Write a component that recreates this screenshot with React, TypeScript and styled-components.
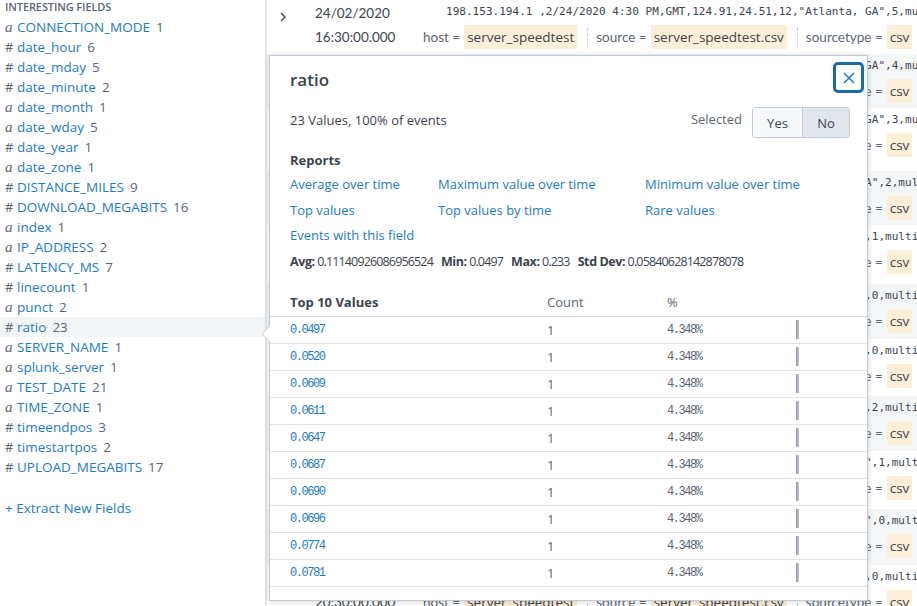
import React from "react";
import styled, { createGlobalStyle, css } from "styled-components";

const GlobalStyle = createGlobalStyle`
  html, body {
    margin: 0;
    padding: 0;
    background: #fff;
    font-family: "Open Sans", "Liberation Sans", sans-serif;
    color: #3c444d;
  }
  * { box-sizing: border-box; }
`;

type FieldType = "a" | "#";

interface Field {
  type: FieldType;
  name: string;
  count: number;
}

const fields: Field[] = [
  { type: "a", name: "CONNECTION_MODE", count: 1 },
  { type: "#", name: "date_hour", count: 6 },
  { type: "#", name: "date_mday", count: 5 },
  { type: "#", name: "date_minute", count: 2 },
  { type: "a", name: "date_month", count: 1 },
  { type: "a", name: "date_wday", count: 5 },
  { type: "#", name: "date_year", count: 1 },
  { type: "a", name: "date_zone", count: 1 },
  { type: "#", name: "DISTANCE_MILES", count: 9 },
  { type: "#", name: "DOWNLOAD_MEGABITS", count: 16 },
  { type: "a", name: "index", count: 1 },
  { type: "a", name: "IP_ADDRESS", count: 2 },
  { type: "#", name: "LATENCY_MS", count: 7 },
  { type: "#", name: "linecount", count: 1 },
  { type: "a", name: "punct", count: 2 },
  { type: "#", name: "ratio", count: 23 },
  { type: "a", name: "SERVER_NAME", count: 1 },
  { type: "a", name: "splunk_server", count: 1 },
  { type: "a", name: "TEST_DATE", count: 21 },
  { type: "a", name: "TIME_ZONE", count: 1 },
  { type: "#", name: "timeendpos", count: 3 },
  { type: "#", name: "timestartpos", count: 2 },
  { type: "#", name: "UPLOAD_MEGABITS", count: 17 },
];

interface EventRow {
  date: string;
  time: string;
  raw: string;
  height: number;
}

const events: EventRow[] = [
  { date: "24/02/2020", time: "16:30:00.000", raw: '198.153.194.1 ,2/24/2020 4:30 PM,GMT,124.91,24.51,12,"Atlanta, GA",5,multi', height: 54 },
  { date: "24/02/2020", time: "16:00:00.000", raw: '198.153.194.1 ,2/24/2020 4:00 PM,GMT,130.22,23.95,11,"Atlanta, GA",4,multi', height: 54 },
  { date: "24/02/2020", time: "15:30:00.000", raw: '198.153.194.1 ,2/24/2020 3:30 PM,GMT,121.07,22.40,13,"Atlanta, GA",3,multi', height: 63 },
  { date: "24/02/2020", time: "15:00:00.000", raw: '198.153.194.1 ,2/24/2020 3:00 PM,GMT,118.45,22.87,9,"Atlanta, GA",2,multi', height: 54 },
  { date: "24/02/2020", time: "14:30:00.000", raw: '198.153.194.1 ,2/24/2020 2:30 PM,GMT,97.42,21.3,9,"Atlanta, GA",1,multi', height: 59 },
  { date: "24/02/2020", time: "14:00:00.000", raw: '198.153.194.1 ,2/24/2020 2:00 PM,GMT,96.18,20.7,8,"Atlanta, GA",0,multi', height: 55 },
  { date: "24/02/2020", time: "13:30:00.000", raw: '198.153.194.1 ,2/24/2020 1:30 PM,GMT,99.51,20.9,8,"Atlanta, GA",0,multi', height: 57 },
  { date: "24/02/2020", time: "13:00:00.000", raw: '198.153.194.1 ,2/24/2020 1:00 PM,GMT,93.06,19.4,7,"Atlanta, GA",2,multi', height: 55 },
  { date: "24/02/2020", time: "12:30:00.000", raw: '198.153.194.1 ,2/24/2020 12:30 PM,GMT,88.3,18.52,7,"Atlanta, GA",1,multi', height: 58 },
  { date: "24/02/2020", time: "12:00:00.000", raw: '198.153.194.1 ,2/24/2020 12:00 PM,GMT,85.9,18.11,6,"Atlanta, GA",0,multi', height: 56 },
  { date: "24/02/2020", time: "20:30:00.000", raw: '198.153.194.1 ,2/24/2020 8:30 PM,GMT,84.1,17.6,6,"Atlanta, GA" ,0,multi', height: 54 },
];

const topValues = [
  "0.0497",
  "0.0520",
  "0.0609",
  "0.0611",
  "0.0647",
  "0.0687",
  "0.0690",
  "0.0696",
  "0.0774",
  "0.0781",
];

const reports = [
  "Average over time",
  "Maximum value over time",
  "Minimum value over time",
  "Top values",
  "Top values by time",
  "Rare values",
  "Events with this field",
];

const App: React.FC = () => {
  return (
    <>
      <GlobalStyle />
      <Page>
        <Sidebar>
          <SidebarTitle>Interesting Fields</SidebarTitle>
          <FieldList>
            {fields.map((f) => (
              <FieldItem key={f.name} $selected={f.name === "ratio"}>
                <TypeMark $italic={f.type === "a"}>{f.type}</TypeMark>
                <FieldName>{f.name}</FieldName>
                <FieldCount>{f.count}</FieldCount>
              </FieldItem>
            ))}
          </FieldList>
          <ExtractLink>+ Extract New Fields</ExtractLink>
        </Sidebar>

        <EventsPanel>
          {events.map((e, i) => (
            <EventItem key={i} $striped={i % 2 === 1} $height={e.height}>
              <Chevron>
                <svg width="8" height="12" viewBox="0 0 8 12">
                  <path d="M2 2l4 4-4 4" fill="none" stroke="#3c444d" strokeWidth="1.4" />
                </svg>
              </Chevron>
              <TimeCell>
                <div>{e.date}</div>
                <div>{e.time}</div>
              </TimeCell>
              <EventBody>
                <RawLine>{e.raw}</RawLine>
                <MetaLine>
                  <MetaPair>
                    host = <MetaValue>server_speedtest</MetaValue>
                  </MetaPair>
                  <MetaSep />
                  <MetaPair>
                    source = <MetaValue>server_speedtest.csv</MetaValue>
                  </MetaPair>
                  <MetaSep />
                  <MetaPair>
                    sourcetype = <MetaValue>csv</MetaValue>
                  </MetaPair>
                </MetaLine>
              </EventBody>
            </EventItem>
          ))}
        </EventsPanel>

        <Popover>
          <Arrow />
          <PopHeader>
            <PopTitle>ratio</PopTitle>
            <CloseButton aria-label="Close">
              <svg width="12" height="12" viewBox="0 0 12 12">
                <path d="M1 1l10 10M11 1L1 11" stroke="#1e7bc2" strokeWidth="1.6" />
              </svg>
            </CloseButton>
          </PopHeader>

          <SummaryRow>
            <Summary>23 Values, 100% of events</Summary>
            <SelectedGroup>
              <SelectedLabel>Selected</SelectedLabel>
              <Toggle>
                <ToggleButton>Yes</ToggleButton>
                <ToggleButton $active>No</ToggleButton>
              </Toggle>
            </SelectedGroup>
          </SummaryRow>

          <Section>
            <SectionLabel>Reports</SectionLabel>
            <ReportGrid>
              {reports.map((r) => (
                <ReportLink key={r}>{r}</ReportLink>
              ))}
            </ReportGrid>
            <Stats>
              <StatLabel>Avg:</StatLabel> 0.11140926086956524
              <StatLabel>Min:</StatLabel> 0.0497
              <StatLabel>Max:</StatLabel> 0.233
              <StatLabel>Std Dev:</StatLabel> 0.05840628142878078
            </Stats>
          </Section>

          <ValuesTable>
            <TableHead>
              <HeadCell $bold>Top 10 Values</HeadCell>
              <HeadCell>Count</HeadCell>
              <HeadCell>%</HeadCell>
              <HeadCell />
            </TableHead>
            {topValues.map((v) => (
              <TableRow key={v}>
                <MonoCell $link>{v}</MonoCell>
                <CountCell>1</CountCell>
                <MonoCell>4.348%</MonoCell>
                <BarCell>
                  <Bar />
                </BarCell>
              </TableRow>
            ))}
          </ValuesTable>
        </Popover>
      </Page>
    </>
  );
};

const Page = styled.div`
  position: relative;
  width: 917px;
  height: 606px;
  overflow: hidden;
  display: flex;
  background: #fff;
`;

const Sidebar = styled.aside`
  width: 267px;
  flex-shrink: 0;
  border-right: 2px solid #e1e6eb;
  display: flex;
  flex-direction: column;
`;

const SidebarTitle = styled.div`
  height: 13px;
  line-height: 13px;
  padding-left: 5px;
  font-size: 11px;
  font-weight: 600;
  text-transform: uppercase;
  color: #5c6773;
  letter-spacing: -0.1px;
`;

const FieldList = styled.ul`
  list-style: none;
  margin: 4px 0 0;
  padding: 0;
`;

const FieldItem = styled.li<{ $selected?: boolean }>`
  height: 20px;
  display: flex;
  align-items: center;
  padding-left: 5px;
  font-size: 13.5px;
  background: ${(p) => (p.$selected ? "#f2f4f5" : "transparent")};
`;

const TypeMark = styled.span<{ $italic?: boolean }>`
  width: 12px;
  color: #5c6773;
  ${(p) =>
    p.$italic
      ? css`
          font-family: "Liberation Serif", "DejaVu Serif", serif;
          font-style: italic;
          font-size: 15px;
        `
      : css`
          font-size: 13px;
        `}
`;

const FieldName = styled.span`
  color: #1e7bc2;
  margin-right: 6px;
`;

const FieldCount = styled.span`
  color: #5c6773;
`;

const ExtractLink = styled.div`
  margin-top: 22px;
  padding-left: 5px;
  font-size: 13.5px;
  color: #1e7bc2;
`;

const EventsPanel = styled.main`
  flex: 1;
  min-width: 0;
  display: flex;
  flex-direction: column;
`;

const EventItem = styled.div<{ $striped?: boolean; $height: number }>`
  flex-shrink: 0;
  height: ${(p) => p.$height}px;
  display: grid;
  grid-template-columns: 48px 108px 1fr;
  background: ${(p) => (p.$striped ? "#f5f6f7" : "#fff")};
  overflow: hidden;
`;

const Chevron = styled.div`
  padding: 6px 0 0 12px;
`;

const TimeCell = styled.div`
  font-family: "Lato", sans-serif;
  font-size: 13.5px;
  color: #3c444d;
  line-height: 24px;
  padding-top: 1px;
`;

const EventBody = styled.div`
  min-width: 0;
  overflow: hidden;
  white-space: nowrap;
`;

const RawLine = styled.div`
  padding-left: 23px;
  font-family: "DejaVu Sans Mono", monospace;
  font-size: 11px;
  letter-spacing: 0.03px;
  line-height: 24px;
  color: #3c444d;
`;

const MetaLine = styled.div`
  display: flex;
  align-items: center;
  height: 26px;
  font-family: "Lato", sans-serif;
  font-size: 13.5px;
  color: #5c6773;
`;

const MetaPair = styled.span`
  display: inline-flex;
  align-items: center;
  gap: 4px;
`;

const MetaValue = styled.span`
  background: #fcefd8;
  color: #3c444d;
  padding: 3px 3px;
  font-family: "Open Sans", sans-serif;
  font-size: 13.5px;
`;

const MetaSep = styled.span`
  width: 0;
  height: 18px;
  border-left: 1px dashed #c3cbd4;
  margin: 0 8px 0 10px;
`;

const Popover = styled.section`
  position: absolute;
  left: 269px;
  top: 55px;
  width: 599px;
  height: 546px;
  background: #fff;
  border: 1px solid #c3cbd4;
  box-shadow: 0 1px 6px rgba(0, 0, 0, 0.15);
  display: flex;
  flex-direction: column;
`;

const Arrow = styled.div`
  position: absolute;
  left: -8px;
  top: 269px;
  width: 0;
  height: 0;
  border-top: 9px solid transparent;
  border-bottom: 9px solid transparent;
  border-right: 8px solid #c3cbd4;

  &::after {
    content: "";
    position: absolute;
    left: 1px;
    top: -8px;
    border-top: 8px solid transparent;
    border-bottom: 8px solid transparent;
    border-right: 7px solid #fff;
  }
`;

const PopHeader = styled.header`
  display: flex;
  align-items: center;
  justify-content: space-between;
  padding: 6px 3px 0 20px;
`;

const PopTitle = styled.h2`
  margin: 4px 0 0;
  font-size: 17px;
  font-weight: 600;
  color: #3c444d;
`;

const CloseButton = styled.button`
  width: 31px;
  height: 31px;
  padding: 0;
  display: flex;
  align-items: center;
  justify-content: center;
  background: #fff;
  border: 3px solid #1a6ca8;
  border-radius: 5px;
`;

const SummaryRow = styled.div`
  display: flex;
  align-items: center;
  justify-content: space-between;
  margin-top: 14px;
  padding: 0 17px 0 20px;
`;

const Summary = styled.div`
  font-size: 13px;
  color: #3c444d;
  margin-top: -5px;
`;

const SelectedGroup = styled.div`
  display: flex;
  align-items: center;
  gap: 10px;
`;

const SelectedLabel = styled.span`
  font-size: 13px;
  color: #5c6773;
  margin-top: -8px;
`;

const Toggle = styled.div`
  display: flex;
  border: 1px solid #c3cbd4;
  border-radius: 3px;
  overflow: hidden;
`;

const ToggleButton = styled.span<{ $active?: boolean }>`
  width: ${(p) => (p.$active ? 47 : 49)}px;
  height: 29px;
  display: flex;
  align-items: center;
  justify-content: center;
  font-size: 13px;
  color: #3c444d;
  background: ${(p) => (p.$active ? "#e1e6eb" : "#f7f8fa")};
  & + & {
    border-left: 1px solid #c3cbd4;
  }
`;

const Section = styled.div`
  padding: 0 20px;
  margin-top: 13px;
`;

const SectionLabel = styled.div`
  font-size: 13px;
  font-weight: 700;
  line-height: 18px;
  color: #3c444d;
`;

const ReportGrid = styled.div`
  display: grid;
  grid-template-columns: 148px 207px 1fr;
  grid-auto-rows: 25.5px;
  margin-top: 3px;
`;

const ReportLink = styled.a`
  font-size: 13px;
  line-height: 25.5px;
  color: #1e7bc2;
  white-space: nowrap;
`;

const Stats = styled.div`
  font-size: 12.5px;
  line-height: 25px;
  color: #3c444d;
  white-space: nowrap;
  letter-spacing: -0.85px;
`;

const StatLabel = styled.b`
  font-weight: 700;
  letter-spacing: -0.4px;
  margin-left: 8px;

  &:first-child {
    margin-left: 0;
  }
`;

const ValuesTable = styled.div`
  margin-top: 15px;
  display: flex;
  flex-direction: column;
`;

const rowGrid = css`
  display: grid;
  grid-template-columns: 257px 120px 129px 1fr;
  align-items: center;
  padding-left: 20px;
`;

const TableHead = styled.div`
  ${rowGrid}
  height: 28px;
  border-bottom: 1px solid #d4dade;
`;

const HeadCell = styled.div<{ $bold?: boolean }>`
  font-size: 13px;
  font-weight: ${(p) => (p.$bold ? 700 : 400)};
  color: ${(p) => (p.$bold ? "#3c444d" : "#5c6773")};
`;

const TableRow = styled.div`
  ${rowGrid}
  height: 27px;
  border-bottom: 1px solid #e1e6eb;
`;

const MonoCell = styled.div<{ $link?: boolean }>`
  font-family: "Liberation Mono", monospace;
  font-size: 12px;
  letter-spacing: -1.45px;
  color: ${(p) => (p.$link ? "#1e7bc2" : "#5c6773")};
`;

const CountCell = styled.div`
  font-size: 13px;
  color: #5c6773;
`;

const BarCell = styled.div`
  display: flex;
  align-items: center;
`;

const Bar = styled.div`
  width: 3px;
  height: 19px;
  background: linear-gradient(to right, #8c959e, #c3cbd4);
`;

export default App;
